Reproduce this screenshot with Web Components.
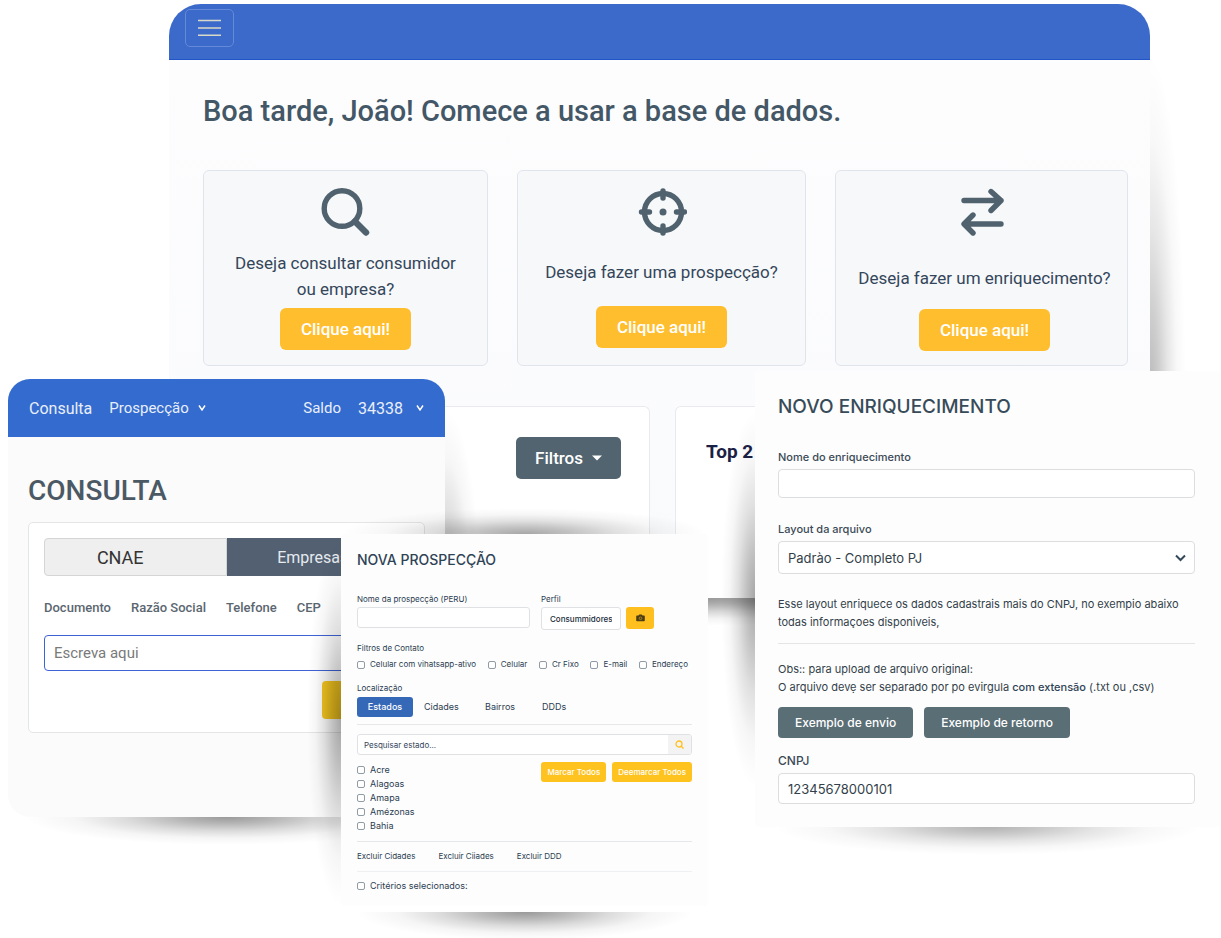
<!DOCTYPE html>
<html lang="pt-BR">
<head>
<meta charset="utf-8">
<title>Base de dados</title>
<style>
html, body { margin: 0; min-height: 100%; background: #fff; }
body { font-family: Inter, "Liberation Sans", sans-serif; color: #33475b; }
</style>
</head>
<body>
<data-showcase></data-showcase>

<script>
const BASE_CSS = `
*, *::before, *::after { box-sizing: border-box; }
h1, h2, p, ul, fieldset { margin: 0; padding: 0; border: 0; list-style: none; }
button, input, select { font: inherit; color: inherit; margin: 0; }
button { border: 0; cursor: pointer; }
a { color: inherit; text-decoration: none; }
svg { display: block; }
`;

class BaseElement extends HTMLElement {
    constructor() {
        super();
        this.attachShadow({ mode: 'open' });
    }

    connectedCallback() {
        this.shadowRoot.innerHTML = `<style>${BASE_CSS}</style>${this.render()}`;
    }
}

// Floating window: a soft curved shadow can be set on each side
class AppWindow extends BaseElement {
    render() {
        const fade = (origin, name) => `radial-gradient(ellipse farthest-side at ${origin},
            rgba(0,0,0,var(${name}, 0)),
            rgba(0,0,0,calc(var(${name}, 0) * .7)) 25%,
            rgba(0,0,0,calc(var(${name}, 0) * .35)) 50%,
            rgba(0,0,0,calc(var(${name}, 0) * .1)) 75%,
            rgba(0,0,0,0))`;
        return `
<style>
:host { display: block; position: absolute; }
.side { position: absolute; pointer-events: none; }
.right { left: 100%; top: var(--right-from, 0); bottom: var(--right-to, 0); width: 36px; background: ${fade('left center', '--right')}; }
.left { right: 100%; top: var(--left-from, 0); bottom: var(--left-to, 0); width: 34px; background: ${fade('right center', '--left')}; }
.bottom { top: calc(100% + var(--bottom-gap, 0px)); left: 4%; right: 4%; height: 28px; background: ${fade('top center', '--bottom')}; }
.top { bottom: 100%; left: 0; right: 0; height: 26px; background: ${fade('bottom center', '--top')}; }
.frame { position: relative; overflow: hidden; border-radius: var(--radius, 4px); background: var(--surface, #fdfdfd); }
</style>
<div class="side right"></div>
<div class="side left"></div>
<div class="side bottom"></div>
<div class="side top"></div>
<div class="frame"><slot></slot></div>
`;
    }
}

class ActionCard extends BaseElement {
    render() {
        return `
<style>
:host { display: flex; flex-direction: column; align-items: center; height: 196px; padding: 17px 12px 0;
    border: 1px solid #e0e4ec; border-radius: 6px; background: #f7f8fa; }
.text { margin-top: var(--text-gap, 14px); font-size: 17px; line-height: 26px; text-align: center; color: #34465a; }
button { margin-top: var(--button-gap, 6px); height: 42px; padding: 0 21px; border-radius: 6px;
    background: #ffbe2d; color: #fff; font-size: 17px; font-weight: 500; }
</style>
<slot name="icon"></slot>
<div class="text"><slot></slot></div>
<button type="button">Clique aqui!</button>
`;
    }
}

class HomePage extends BaseElement {
    render() {
        return `
<style>
:host { display: block; font-family: Roboto, "Liberation Sans", sans-serif; }
header { height: 56px; padding: 5px 16px; background: #3c6acb; border-bottom: 1px solid #1f55c8; }
.menu { display: grid; place-items: center; width: 49px; height: 38px; border: 1px solid #6589d6; border-radius: 5px; background: none; }
main { padding: 34px 22px 0 34px; background: linear-gradient(#fdfdfe, #f9fafc); }
h1 { font-size: 29px; line-height: 34px; font-weight: 500; color: #435766; }
.cards { display: grid; grid-template-columns: 285fr 289fr 293fr; gap: 29px; margin-top: 42px; }
.middle { --text-gap: 23px; --button-gap: 21px; }
.last { --text-gap: 29px; --button-gap: 18px; padding-left: 18px; }
.panels { display: grid; grid-template-columns: 447fr 453fr; gap: 25px; margin-top: 40px; }
.panel { display: flex; height: 192px; padding: 30px 28px 30px 30px; border: 1px solid #e8eaef; border-bottom: 0; border-radius: 6px 6px 0 0; background: #fff; }
.filter { display: flex; align-items: center; gap: 9px; height: 42px; margin-left: auto; padding: 0 19px; border-radius: 5px; background: #51646f; color: #fff; font-size: 17px; font-weight: 500; }
h2 { font-size: 19px; line-height: 30px; font-weight: 700; color: #1b2145; }
</style>
<header>
    <button class="menu" type="button" aria-label="Menu">
        <svg width="24" height="18" viewBox="0 0 24 18" stroke="#d9d9c8" stroke-width="1.4"><path d="M0 1.5h23M0 9h23M0 16.2h23"/></svg>
    </button>
</header>
<main>
    <h1>Boa tarde, João! Comece a usar a base de dados.</h1>
    <div class="cards">
        <action-card>
            <svg slot="icon" width="50" height="48" viewBox="0 0 50 48" fill="none" stroke="#50626e" stroke-linecap="round"><circle cx="21" cy="20.5" r="17.8" stroke-width="5.4"/><path d="M34 33.5l11 11" stroke-width="6.4"/></svg>
            Deseja consultar consumidor<br>ou empresa?
        </action-card>
        <action-card class="middle">
            <svg slot="icon" width="50" height="48" viewBox="0 0 50 48" fill="none" stroke="#50626e" stroke-linecap="round"><circle cx="26" cy="24" r="18.5" stroke-width="5.4"/><path d="M26 3v7M26 38v7M4.5 24h8M39.5 24h8" stroke-width="5.4"/><circle cx="26" cy="24" r="3.5" fill="#50626e" stroke="none"/></svg>
            Deseja fazer uma prospecção?
        </action-card>
        <action-card class="last">
            <svg slot="icon" width="50" height="48" viewBox="0 0 50 48" fill="none" stroke="#50626e" stroke-width="5.4" stroke-linecap="round" stroke-linejoin="round"><path d="M4 12.500H41M31 3.500l10 9L31 22.500M41 36H5M13 27L4 36l9 9"/></svg>
            Deseja fazer um enriquecimento?
        </action-card>
    </div>
    <div class="panels">
        <section class="panel">
            <button class="filter" type="button">Filtros <svg width="10" height="6" viewBox="0 0 10 6"><path d="M0 .5h10L5 5.5z" fill="#fff"/></svg></button>
        </section>
        <section class="panel"><h2>Top 2</h2></section>
    </div>
</main>
`;
    }
}

class ConsultaPage extends BaseElement {
    render() {
        const chevron = '<svg width="8" height="8" viewBox="0 0 8 8" fill="none" stroke="#fff" stroke-width="1.5"><path d="M1 1.5l3 4.500 3-4.500"/></svg>';
        return `
<style>
:host { display: block; font-family: Roboto, "Liberation Sans", sans-serif; }
nav { display: flex; align-items: center; gap: 17px; height: 58px; padding: 0 21px; background: #346bce; color: #e9effa; font-size: 16px; }
nav a { display: flex; align-items: center; gap: 9px; }
nav .small { font-size: 15px; }
nav .balance { margin-left: auto; }
nav .amount { gap: 13px; }
main { padding: 37px 20px 84px; }
h1 { font-size: 28px; line-height: 34px; font-weight: 500; color: #4b5965; }
.box { height: 211px; margin-top: 14px; padding: 15px; border: 1px solid #e4e5e7; border-radius: 5px; background: #fff; }
.tabs { display: grid; grid-template-columns: 1fr 1fr; height: 38px; }
.tabs button { padding: 0 16px 0 6px; background: #526072; color: #e6eaee; font-size: 16px; }
.tabs .first { padding-right: 36px; border: 1px solid #d5d5d5; border-radius: 4px 0 0 4px; background: #efefef; color: #333; font-size: 18px; }
.kinds { display: flex; gap: 20px; margin-top: 20px; font-size: 13px; line-height: 24px; font-weight: 500; color: #5b6670; white-space: nowrap; }
input { display: block; width: 100%; height: 36px; margin-top: 15px; padding: 0 9px; border: 1px solid #3f62d6; border-radius: 4px; background: #fff; font-size: 15px; }
input::placeholder { color: #7a7a7a; opacity: 1; }
.search { display: block; width: 87px; height: 38px; margin: 10px 0 0 auto; border-radius: 4px; background: #f7c81f; }
</style>
<nav>
    <a href="#consulta">Consulta</a>
    <a class="small" href="#prospeccao">Prospecção ${chevron}</a>
    <a class="small balance" href="#saldo">Saldo</a>
    <a class="amount" href="#saldo">34338 ${chevron}</a>
</nav>
<main>
    <h1>CONSULTA</h1>
    <div class="box">
        <div class="tabs"><button class="first" type="button">CNAE</button><button type="button">Empresas</button></div>
        <div class="kinds"><a href="#doc">Documento</a><a href="#razao">Razão Social</a><a href="#tel">Telefone</a><a href="#cep">CEP</a><a href="#e">E</a></div>
        <input type="text" placeholder="Escreva aqui" aria-label="Valor da consulta">
        <button class="search" type="button" aria-label="Consultar"></button>
    </div>
</main>
`;
    }
}

class ProspeccaoPage extends BaseElement {
    render() {
        const check = (text) => `<label class="check"><input type="checkbox">${text}</label>`;
        return `
<style>
:host { display: block; padding: 16px 16px 13px; font-size: 9px; line-height: 14px; color: #2c3e52; }
h1 { font-size: 14px; line-height: 20px; font-weight: 500; color: #2f4356; }
.row { display: flex; align-items: flex-start; }
.top { gap: 11px; margin-top: 22px; font-size: 8px; }
.name { flex: 0 1 173px; }
.top label { display: block; height: 15px; }
.field { display: block; width: 100%; height: 21px; padding: 0 6px; border: 1px solid #dfe1e4; border-radius: 3px; background: #fff; }
select.field { appearance: none; width: 80px; height: 23px; padding: 0 8px; font-size: 8px; font-weight: 500; color: #222c38; }
.camera { display: grid; place-items: center; width: 28px; height: 22px; margin: 15px 0 0 -6px; padding: 0; border-radius: 3px; background: #ffc01f; }
fieldset { margin-top: 11px; }
.legend { display: block; font-size: 8px; }
.place { margin-top: 9px; }
.check { display: flex; align-items: center; gap: 5px; white-space: nowrap; }
.check input { appearance: none; flex: none; width: 8px; height: 8px; border: 1px solid #909ba6; border-radius: 2px; background: #fff; }
.contacts { justify-content: space-between; margin: 2px 4px 0 0; font-size: 8px; line-height: 15px; }
.tabs { margin-top: 2px; }
.tabs button { height: 20px; padding: 0; background: none; font-size: 9px; text-align: left; }
.tabs .active { flex: none; width: 56px; margin-right: 11px; border-radius: 3px; background: #3668b8; color: #fff; font-weight: 500; text-align: center; }
.tabs .state { width: 61px; }
.tabs .area { width: 57px; }
hr { height: 1px; margin: 7px 0 9px; border: 0; background: #e6e7e9; }
.search { display: flex; height: 21px; border: 1px solid #dfe1e4; border-radius: 3px; overflow: hidden; background: #fff; }
.search input { flex: 1; min-width: 0; padding: 0 6px; border: 0; background: none; font-size: 8px; }
.search input::placeholder { color: #34465a; opacity: 1; }
.search button { display: grid; place-items: center; width: 23px; padding: 0; background: #f3f3f3; }
.states { justify-content: space-between; margin-top: 7px; }
.states ul { padding-top: 1px; }
.states .row { gap: 6px; }
.yellow { height: 20px; padding: 0 6px; border-radius: 3px; background: #ffc31f; color: #fff; font-size: 8px; font-weight: 500; }
.excluded { gap: 23px; font-size: 8px; }
.tight { margin: 8px 0 7px; }
.light { opacity: .6; }
</style>
<h1>NOVA PROSPECÇÃO</h1>
<div class="row top">
    <div class="name"><label for="name">Nome da prospecção (PERU)</label><input class="field" id="name" type="text"></div>
    <div><label for="profile">Perfil</label><select class="field" id="profile"><option>Consummidores</option></select></div>
    <button class="camera" type="button" aria-label="Foto"><svg width="9" height="8" viewBox="0 0 9 8"><path d="M1 1.500h1.500l.8-1h2.400l.8 1H8q.8 0 .8.800v4.200q0 .8-.8.800H1q-.8 0-.8-.8V2.300q0-.8.8-.8z" fill="#4b3d16"/><circle cx="4.500" cy="4.300" r="1.300" fill="none" stroke="#c8951a" stroke-width=".8"/></svg></button>
</div>
<fieldset>
    <span class="legend">Filtros de Contato</span>
    <div class="row contacts">${['Celular com vihatsapp-ativo', 'Celular', 'Cr Fixo', 'E-mail', 'Endereço'].map(check).join('')}</div>
</fieldset>
<div class="legend place">Localização</div>
<div class="row tabs">
    <button class="active" type="button">Estados</button><button class="state" type="button">Cidades</button><button class="area" type="button">Bairros</button><button type="button">DDDs</button>
</div>
<hr>
<div class="search">
    <input type="text" placeholder="Pesquisar estado..." aria-label="Pesquisar estado">
    <button type="button" aria-label="Pesquisar"><svg width="9" height="9" viewBox="0 0 9 9" fill="none" stroke="#ffc01f" stroke-width="1.3"><circle cx="4" cy="4" r="3"/><path d="M6.200 6.200l2.300 2.300"/></svg></button>
</div>
<div class="row states">
    <ul>${['Acre', 'Alagoas', 'Amapa', 'Amézonas', 'Bahia'].map((s) => `<li>${check(s)}</li>`).join('')}</ul>
    <div class="row"><button class="yellow" type="button">Marcar Todos</button><button class="yellow" type="button">Deemarcar Todos</button></div>
</div>
<hr class="tight">
<div class="row excluded"><a href="#cidades">Excluir Cidades</a><a href="#ciiades">Excluir Ciiades</a><a href="#ddd">Excluir DDD</a></div>
<hr class="tight light">
${check('Critérios selecionados:')}
`;
    }
}

class EnriquecimentoPage extends BaseElement {
    render() {
        return `
<style>
:host { display: block; padding: 23px 25px 23px 23px; font-size: 11px; line-height: 18px; color: #333f4a; }
h1 { font-size: 19px; line-height: 26px; font-weight: 500; color: #384b59; }
label { display: block; margin-top: 28px; font-weight: 500; color: #3b4a57; }
input, .select { display: flex; width: 100%; margin-top: 3px; border: 1px solid #dbdddf; border-radius: 4px; background: #fff; }
input { height: 31px; padding: 0 9px; font-size: 13px; }
#name { height: 29px; }
.second { margin-top: 22px; }
.third { margin-top: 14px; font-size: 12px; }
.select { align-items: center; height: 33px; padding-right: 8px; }
select { appearance: none; flex: 1; height: 100%; padding: 0 9px; border: 0; background: none; font-size: 13px; }
.select svg { flex: none; }
.about { margin-top: 21px; }
hr { height: 1px; margin: 12px 0 16px; border: 0; background: #e3e5e6; }
strong { font-weight: 500; color: #2f4356; }
.buttons { display: flex; gap: 11px; margin-top: 11px; }
.buttons button { height: 31px; padding: 0 17px; border-radius: 4px; background: #5a6e76; color: #fff; font-size: 12px; font-weight: 500; }
</style>
<h1>NOVO ENRIQUECIMENTO</h1>
<label for="name">Nome do enriquecimento</label>
<input id="name" type="text">
<label class="second" for="layout">Layout da arquivo</label>
<div class="select">
    <select id="layout"><option>Padrào - Completo PJ</option></select>
    <svg width="11" height="8" viewBox="0 0 11 8" fill="none" stroke="#34495a" stroke-width="2"><path d="M1 1.500l4.500 4.500L10 1.500"/></svg>
</div>
<p class="about">Esse layout enriquece os dados cadastrais mais do CNPJ, no exempio abaixo<br>todas informaçoes disponiveis,</p>
<hr>
<p>Obs:: para upload de arquivo original:</p>
<p>O arquivo devẹ ser separado por po evirgula <strong>com extensão</strong> (.txt ou ,csv)</p>
<div class="buttons"><button type="button">Exemplo de envio</button><button type="button">Exemplo de retorno</button></div>
<label class="third" for="cnpj">CNPJ</label>
<input id="cnpj" type="text" value="12345678000101">
`;
    }
}

class DataShowcase extends BaseElement {
    render() {
        return `
<style>
:host { display: block; position: relative; min-height: 938px; overflow: hidden; }
.home { top: 4px; left: 169px; right: 71px; --radius: 32px 32px 0 0; --right: .28; --right-from: 50px; --right-to: -150px; --bottom: .45; }
.consulta { top: 379px; left: 8px; right: 776px; --radius: 22px; --surface: #fbfbfb; --right: .35; --right-from: 30px; --right-to: 0px; --bottom: .4; }
.enriquecimento { top: 371px; left: 755px; right: 1px; --left: .35; --left-from: 40px; --left-to: 40px; --bottom: .3; }
.prospeccao { top: 534px; left: 341px; right: 513px; --left: .35; --left-from: 0px; --left-to: 0px; --top: .35; --bottom: .4; --bottom-gap: 6px; }
</style>
<app-window class="home"><home-page></home-page></app-window>
<app-window class="consulta"><consulta-page></consulta-page></app-window>
<app-window class="enriquecimento"><enriquecimento-page></enriquecimento-page></app-window>
<app-window class="prospeccao"><prospeccao-page></prospeccao-page></app-window>
`;
    }
}

customElements.define('app-window', AppWindow);
customElements.define('action-card', ActionCard);
customElements.define('home-page', HomePage);
customElements.define('consulta-page', ConsultaPage);
customElements.define('prospeccao-page', ProspeccaoPage);
customElements.define('enriquecimento-page', EnriquecimentoPage);
customElements.define('data-showcase', DataShowcase);
</script>
</body>
</html>
